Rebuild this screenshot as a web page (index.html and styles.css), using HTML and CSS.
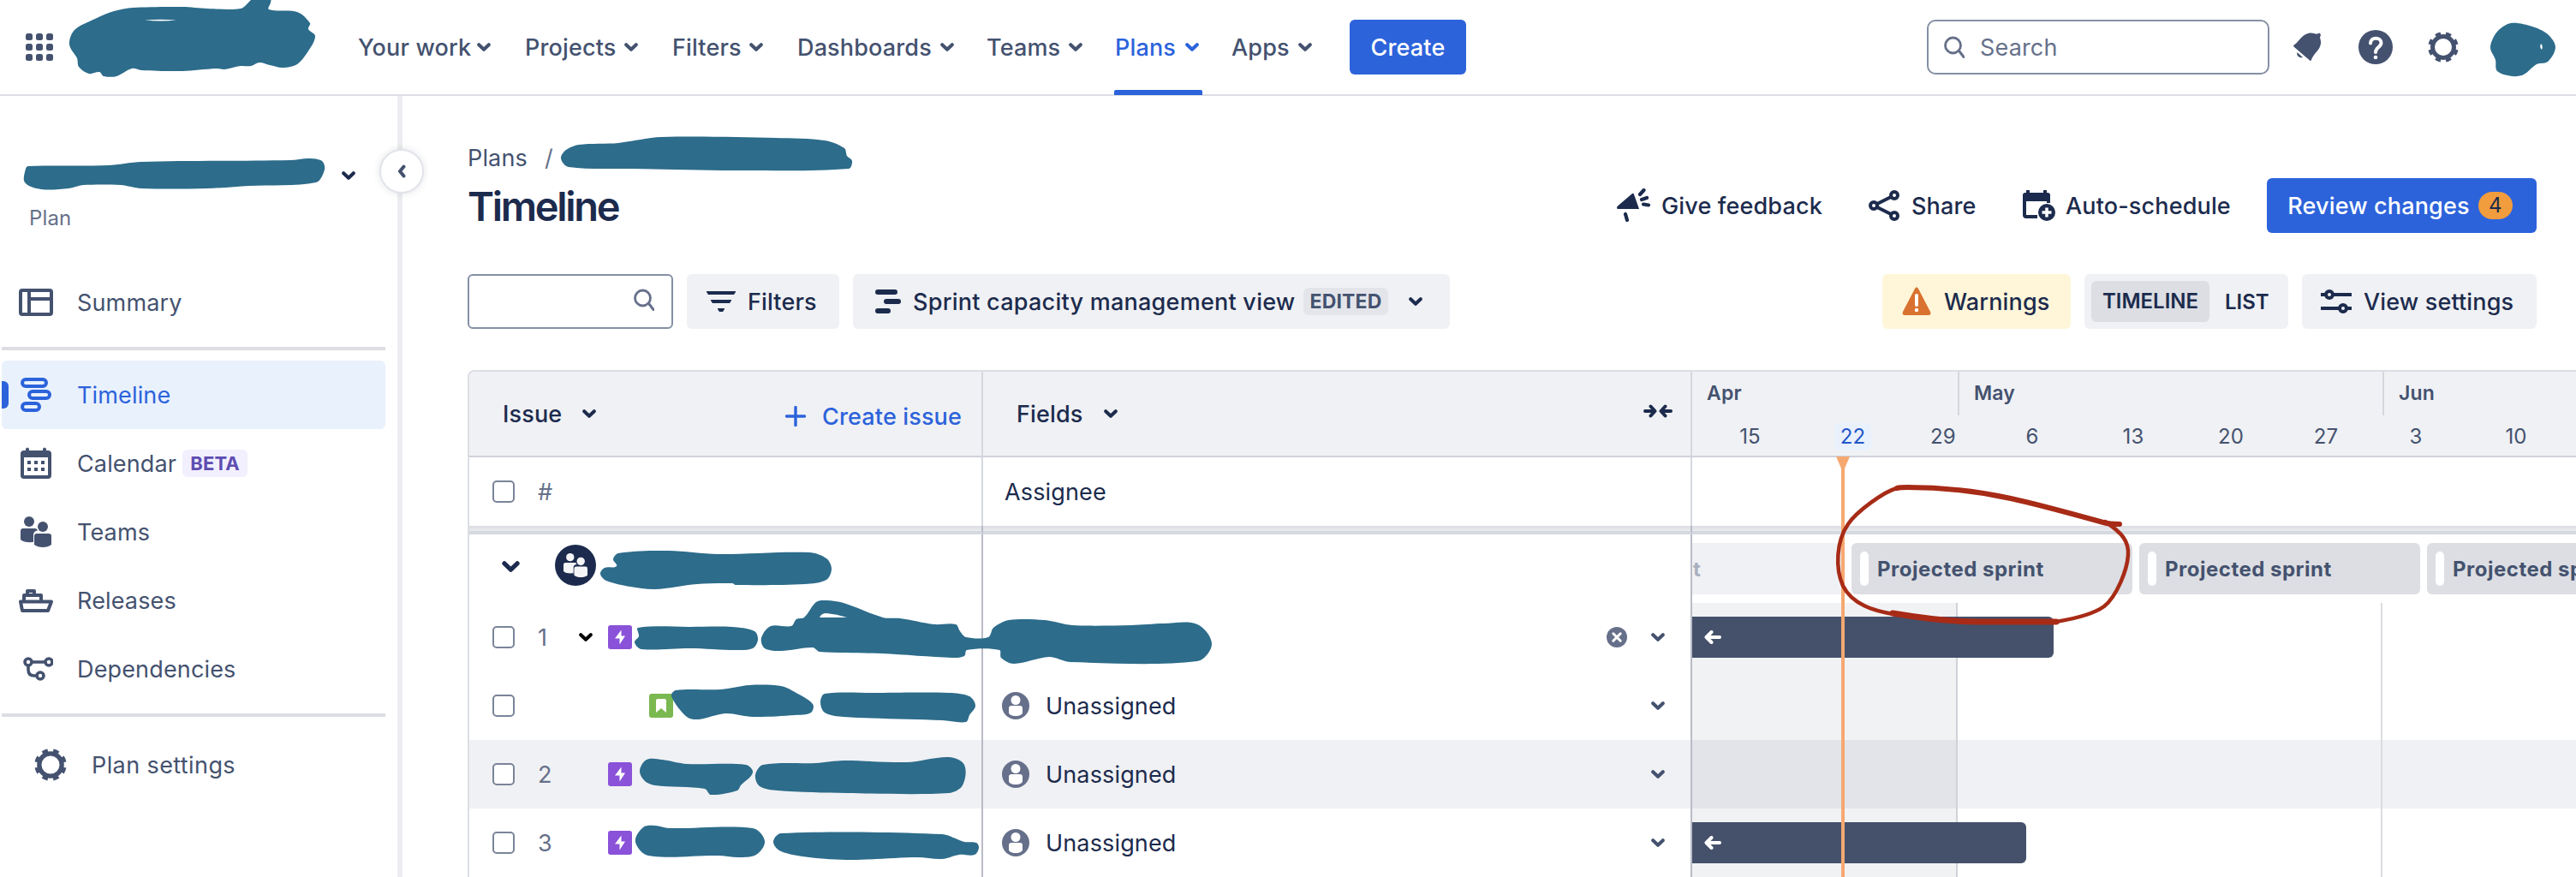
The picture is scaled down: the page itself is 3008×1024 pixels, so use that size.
FILE: index.html
```html
<!DOCTYPE html>
<html lang="en">
<head>
  <meta charset="UTF-8">
  <meta name="viewport" content="width=device-width, initial-scale=1.0">
  <title>Timeline - Plans</title>
  <link rel="stylesheet" href="styles.css">
</head>
<body>
  <!-- shared icons -->
  <svg class="sprite" aria-hidden="true">
    <symbol id="chevron" viewBox="0 0 16 10"><path d="M2.2 2.2 8 7.800l5.800-5.600" fill="none" stroke="currentColor" stroke-width="4" stroke-linecap="round" stroke-linejoin="round"/></symbol>
    <symbol id="gear" viewBox="0 0 38 38">
      <circle cx="19" cy="19" r="12.500" fill="none" stroke="currentColor" stroke-width="5"/>
      <circle cx="19" cy="19" r="15.500" fill="none" stroke="currentColor" stroke-width="4.600" pathLength="16" stroke-dasharray="1 1" stroke-dashoffset="-0.500"/>
    </symbol>
    <symbol id="magnifier" viewBox="0 0 24 26"><path d="M18 18l5 6.500" stroke="currentColor" stroke-width="3" stroke-linecap="round"/><circle cx="10.500" cy="11" r="9" fill="none" stroke="currentColor" stroke-width="2.800"/></symbol>
    <symbol id="people" viewBox="0 0 36 36">
      <circle cx="10" cy="6" r="6" fill="currentColor"/>
      <path d="M3 14h14a3 3 0 0 1 3 2.500c-3 .5-5 2-5 5V30C9 30.500 3 30 0 27V17a3 3 0 0 1 3-3z" fill="currentColor"/>
      <circle cx="26" cy="12" r="6" fill="currentColor"/>
      <path d="M19 20h14a3 3 0 0 1 3 3v10c-5 4-15 4-20 0V23a3 3 0 0 1 3-3z" fill="currentColor"/>
    </symbol>
    <symbol id="epic" viewBox="0 0 28 28"><rect width="28" height="28" rx="3" fill="#8a52d9"/><path d="M15.500 5.500 8 15.500h5.500V22.500L20 12.500h-4.500z" fill="#fff"/></symbol>
    <symbol id="story" viewBox="0 0 28 28"><rect width="28" height="28" rx="3" fill="#7ab850"/><path d="M10 6h8a2 2 0 0 1 2 2v14l-6-5-6 5V8a2 2 0 0 1 2-2z" fill="#fff"/></symbol>
    <symbol id="person" viewBox="0 0 32 32"><circle cx="16" cy="16" r="16" fill="#66708a"/><circle cx="16" cy="9.500" r="5.500" fill="#fff"/><path d="M11 16h10a3 3 0 0 1 3 3v5c0 2-3 4-8 4s-8-2-8-4v-5a3 3 0 0 1 3-3z" fill="#fff"/></symbol>
    <symbol id="arrow-left" viewBox="0 0 20 16"><path d="M18 8H3M8.500 2 2.500 8l6 6" fill="none" stroke="currentColor" stroke-width="4" stroke-linecap="round" stroke-linejoin="round"/></symbol>
  </svg>

  <header class="topbar">
    <svg class="switcher" viewBox="0 0 32 32"><g fill="#44526f"><rect width="8" height="8" rx="2.500"/><rect x="12" width="8" height="8" rx="2.500"/><rect x="24" width="8" height="8" rx="2.500"/><rect y="12" width="8" height="8" rx="2.500"/><rect x="12" y="12" width="8" height="8" rx="2.500"/><rect x="24" y="12" width="8" height="8" rx="2.500"/><rect y="24" width="8" height="8" rx="2.500"/><rect x="12" y="24" width="8" height="8" rx="2.500"/><rect x="24" y="24" width="8" height="8" rx="2.500"/></g></svg>
    <nav class="main-nav">
      <a>Your work <svg class="chev"><use href="#chevron"/></svg></a>
      <a>Projects <svg class="chev"><use href="#chevron"/></svg></a>
      <a>Filters <svg class="chev"><use href="#chevron"/></svg></a>
      <a>Dashboards <svg class="chev"><use href="#chevron"/></svg></a>
      <a>Teams <svg class="chev"><use href="#chevron"/></svg></a>
      <a class="active">Plans <svg class="chev"><use href="#chevron"/></svg></a>
      <a>Apps <svg class="chev"><use href="#chevron"/></svg></a>
    </nav>
    <button class="primary create">Create</button>
    <div class="search"><svg class="magnifier"><use href="#magnifier"/></svg>Search</div>
    <div class="top-icons">
      <svg class="bell" viewBox="0 0 34 34"><path d="M0 15c6-3 9-13 19-14.500 4-.5 6 1 8 1.200l3.500-1.200 1.500 2-1 3.500c1 3 1.500 6 .5 9-2 7-8 9-11 18q-1.500 0-2-1L1 17q-1-1-1-2z" fill="#44526f"/><path d="M4.500 23 11 29c-3 1-8-1-6.500-6z" fill="#44526f"/></svg>
      <svg class="help" viewBox="0 0 40 40"><circle cx="20" cy="20" r="20" fill="#44526f"/><path d="M14 15.500c0-8 12.500-7.500 12.500-.5 0 5-6.500 5-6.500 11" fill="none" stroke="#fff" stroke-width="4" stroke-linecap="round"/><circle cx="20" cy="32" r="2.300" fill="#fff"/></svg>
      <svg class="gear"><use href="#gear"/></svg>
    </div>
  </header>

  <div class="layout">
    <aside class="sidebar">
      <div class="plan-switch"><svg class="chev"><use href="#chevron"/></svg></div>
      <p class="plan-type">Plan</p>
      <ul class="side-nav">
        <li><svg viewBox="0 0 40 40"><rect x="2" y="6" width="36" height="28" rx="2" fill="none" stroke="currentColor" stroke-width="4"/><path d="M12 6v28M12 16h26" stroke="currentColor" stroke-width="4"/></svg>Summary</li>
        <li class="rule"></li>
        <li class="selected"><svg viewBox="0 0 40 40"><g fill="none" stroke="currentColor" stroke-width="4"><rect x="4" y="2" width="28" height="8" rx="4"/><rect x="12" y="16" width="24" height="8" rx="4"/><rect x="4" y="30" width="20" height="8" rx="4"/></g></svg>Timeline</li>
        <li><svg viewBox="0 0 40 40"><rect x="4" y="7" width="32" height="29" rx="2" fill="none" stroke="currentColor" stroke-width="4"/><path d="M2 8h36v5H2zM8 3q2-3 4 0v5H8zM28 3q2-3 4 0v5h-4z" fill="currentColor"/><path d="M10 19h20M10 27h20" stroke="currentColor" stroke-width="4" stroke-dasharray="4 4"/></svg>Calendar <span class="beta">BETA</span></li>
        <li><svg viewBox="-2 -2 40 40"><use href="#people" width="36" height="36"/></svg>Teams</li>
        <li><svg viewBox="0 0 40 40"><path d="M2 21.500h36L34 32H4zM6 21v-7h20v7M10 14V9h8v5" fill="none" stroke="currentColor" stroke-width="4" stroke-linejoin="round"/></svg>Releases</li>
        <li><svg viewBox="0 0 40 40"><g fill="none" stroke="currentColor" stroke-width="3.600"><circle cx="11" cy="12" r="4"/><circle cx="35" cy="12" r="4"/><circle cx="25" cy="28" r="4"/><path d="M15 12h16M11 16v5q0 7 7 7h3"/></g></svg>Dependencies</li>
        <li class="rule"></li>
        <li class="settings"><svg class="gear"><use href="#gear"/></svg>Plan settings</li>
      </ul>
      <button class="collapse" aria-label="Collapse sidebar"><svg viewBox="0 0 10 16"><path d="M7.500 2.500 3 8l4.500 5.500" fill="none" stroke="currentColor" stroke-width="4" stroke-linecap="round" stroke-linejoin="round"/></svg></button>
    </aside>

    <main class="content">
      <div class="crumbs"><span>Plans</span><span class="slash">/</span></div>
      <div class="title-row">
        <h1>Timeline</h1>
        <div class="actions">
          <a class="feedback"><svg viewBox="0 0 40 40"><path d="M1 20.500 18 6q1.500-1 2 1l6 17H1q-2-1 0-3.500z" fill="currentColor"/><path d="M10 30l2 7M27 7l4.500-5M29 13l6-2M31 18.500l6 1" stroke="currentColor" stroke-width="4.200" stroke-linecap="round"/></svg>Give feedback</a>
          <a class="share"><svg viewBox="0 0 36 36"><g fill="none" stroke="currentColor" stroke-width="4"><circle cx="6" cy="18" r="4"/><circle cx="30" cy="6" r="4"/><circle cx="30" cy="30" r="4"/><path d="M10 16 26 8M10 20l16 8"/></g></svg>Share</a>
          <a class="auto"><svg viewBox="0 0 38 38"><path d="M17 32H4q-2 0-2-2V8h28v8" fill="none" stroke="currentColor" stroke-width="4"/><path d="M0 7q0-3 3-3h1V1h4v3h16V1h4v3h1q3 0 3 3v7H0z" fill="currentColor"/><circle cx="28" cy="27" r="10" fill="currentColor"/><path d="M28 21.500v11M22.500 27h11" stroke="#fff" stroke-width="3.500"/></svg>Auto-schedule</a>
          <button class="primary review">Review changes <span class="count">4</span></button>
        </div>
      </div>

      <div class="toolbar">
        <div class="filter-input"><svg class="magnifier"><use href="#magnifier"/></svg></div>
        <button class="btn filters"><svg viewBox="0 0 34 24"><path d="M0 0h34v1l-2 3H2L0 1zM5 10h24v1l-2 3H7l-2-3zM13 20h8v1l-2 3h-4l-2-3z" fill="currentColor"/></svg>Filters</button>
        <button class="btn view"><svg viewBox="0 0 30 28"><path d="M3 3h20M13 14h14M3 25h12" stroke="currentColor" stroke-width="6" stroke-linecap="round"/></svg><span class="view-name">Sprint capacity management view</span><span class="edited">EDITED</span><svg class="chev"><use href="#chevron"/></svg></button>
        <button class="btn warnings"><svg viewBox="0 0 34 34"><path d="M15 2q2-3.500 4 0l14 27q1.500 4-2 4H3q-3.500 0-2-4z" fill="#d97230"/><path d="M17 10v11" stroke="#fff" stroke-width="4" stroke-linecap="round"/><circle cx="17" cy="27" r="2.200" fill="#fff"/></svg>Warnings</button>
        <div class="toggle"><span class="on">TIMELINE</span><span>LIST</span></div>
        <button class="btn settings-btn"><svg viewBox="0 0 36 28"><g fill="none" stroke="currentColor" stroke-width="4"><circle cx="10" cy="6" r="4"/><circle cx="26" cy="22" r="4"/><path d="M0 6h6M14 6h22M0 22h22M30 22h6"/></g></svg>View settings</button>
      </div>

      <section class="table">
        <div class="col issues">
          <div class="head"><span>Issue</span><svg class="chev"><use href="#chevron"/></svg><a class="create-issue"><svg viewBox="0 0 24 24"><path d="M12 1.500v21M1.500 12h21" stroke="currentColor" stroke-width="3.400" stroke-linecap="round"/></svg>Create issue</a></div>
          <div class="row"><i class="check"></i><span class="num">#</span></div>
          <div class="band"></div>
          <div class="row team"><svg class="team-chev"><use href="#chevron"/></svg><span class="team-avatar"><svg><use href="#people"/></svg></span></div>
          <div class="row"><i class="check"></i><span class="num">1</span><svg class="chev black"><use href="#chevron"/></svg><svg class="type"><use href="#epic"/></svg></div>
          <div class="row child"><i class="check"></i><span class="num"></span><svg class="type"><use href="#story"/></svg></div>
          <div class="row alt"><i class="check"></i><span class="num">2</span><svg class="type"><use href="#epic"/></svg></div>
          <div class="row"><i class="check"></i><span class="num">3</span><svg class="type"><use href="#epic"/></svg></div>
        </div>

        <div class="col fields">
          <div class="head"><span>Fields</span><svg class="chev"><use href="#chevron"/></svg><svg class="shrink" viewBox="0 0 34 16"><path d="M2 8h11M8.500 2.500 13.500 8l-5 5.500M32 8H21M25.500 2.500 20.500 8l5 5.500" fill="none" stroke="currentColor" stroke-width="4" stroke-linecap="round" stroke-linejoin="round"/></svg></div>
          <div class="row"><span class="assignee">Assignee</span></div>
          <div class="band"></div>
          <div class="row"></div>
          <div class="row"><svg class="clear" viewBox="0 0 24 24"><circle cx="12" cy="12" r="12" fill="#66708a"/><path d="M7.800 7.800l8.400 8.400M16.200 7.800l-8.400 8.400" stroke="#fff" stroke-width="3" stroke-linecap="round"/></svg><svg class="chev"><use href="#chevron"/></svg></div>
          <div class="row"><svg class="person"><use href="#person"/></svg>Unassigned<svg class="chev end"><use href="#chevron"/></svg></div>
          <div class="row alt"><svg class="person"><use href="#person"/></svg>Unassigned<svg class="chev end"><use href="#chevron"/></svg></div>
          <div class="row"><svg class="person"><use href="#person"/></svg>Unassigned<svg class="chev end"><use href="#chevron"/></svg></div>
        </div>

        <div class="col chart">
          <div class="head dates">
            <div class="months"><span>Apr</span><span>May</span><span>Jun</span></div>
            <div class="days"><span>15</span><span class="today">22</span><span>29</span><span>6</span><span>13</span><span>20</span><span>27</span><span>3</span><span>10</span></div>
          </div>
          <div class="row"></div>
          <div class="band"></div>
          <div class="row sprints"><div class="sprint past">t</div><div class="sprint">Projected sprint</div><div class="sprint">Projected sprint</div><div class="sprint">Projected sprint</div></div>
          <div class="row"><div class="bar long"><svg><use href="#arrow-left"/></svg></div></div>
          <div class="row"></div>
          <div class="row alt"></div>
          <div class="row"><div class="bar short"><svg><use href="#arrow-left"/></svg></div></div>
          <!-- overlays on the chart -->
          <div class="shade"></div>
          <div class="june-line"></div>
          <svg class="marker" viewBox="0 0 16 14"><path d="M0 0h16L10 14H6z" fill="#f6a871"/></svg>
          <div class="today-line"></div>
        </div>
      </section>
    </main>
  </div>

  <!-- hand drawn marks over the page -->
  <svg class="marks" viewBox="0 0 3008 1024">
    <g id="scribbles"></g>
    <path d="M169 23.500q18-1.500 37 0-18 2-37 0z" fill="#fff"/>
    <path d="M2967 51q3 3 1 7-3-3-1-7z" fill="#fff"/>
    <path d="M957 721q2-5 8-5 12 1 24 5z" fill="#fff"/>
    <g fill="none" stroke="#a72b16" stroke-linecap="round" stroke-linejoin="round">
      <path d="M2475 612q-12 0-19-2C2420 600 2376 588 2348 582 2316 575 2270 569 2227 569q-8 0-12 1" stroke-width="6"/>
      <path d="M2215 570C2200 574 2168 597 2158 612 2144 632 2143 664 2152 684 2162 704 2185 715 2227 719" stroke-width="4.500"/>
      <path d="M2210 716C2240 721 2275 726 2310 726H2401" stroke-width="7"/>
      <path d="M2401 726C2425 722 2446 716 2457 708 2472 696 2484 665 2485 648 2486 632 2478 622 2458 609" stroke-width="4.500"/>
    </g>
  </svg>
  <script src="script.js"></script>
</body>
</html>
```
FILE: styles.css
```css
* {
  box-sizing: border-box;
}

body {
  margin: 0;
  width: 3008px;
  height: 1024px;
  overflow: hidden;
  position: relative;
  background: #fff;
  color: #1c2b4d;
  font-family: Inter, "Liberation Sans", sans-serif;
  font-size: 27px;
  letter-spacing: 0.15px;
}

svg {
  display: block;
  flex: none;
}

button {
  border: none;
  font: inherit;
  letter-spacing: inherit;
  color: inherit;
}

.sprite {
  position: absolute;
  width: 0;
  height: 0;
}

.chev {
  width: 16px;
  height: 10px;
}

.magnifier {
  width: 24px;
  height: 26px;
  color: #66708a;
}

.gear {
  width: 38px;
  height: 38px;
}

/* top bar */
.topbar {
  display: flex;
  align-items: center;
  height: 112px;
  padding: 0 136px 0 30px;
  border-bottom: 2px solid #dcdee4;
}

.switcher {
  width: 32px;
  height: 32px;
}

.main-nav {
  display: grid;
  grid-template-columns: 155px 134px 108px 185px 112px 98px 94px;
  column-gap: 38px;
  height: 110px;
  margin-left: 356px;
  color: #44526f;
  font-weight: 500;
}

.main-nav a {
  display: flex;
  align-items: center;
  justify-content: space-between;
  white-space: nowrap;
}

.main-nav a:nth-child(n + 2):nth-child(-n + 4) {
  padding-left: 2px;
}

.main-nav .active {
  position: relative;
  color: #2c63db;
}

.main-nav .active::after {
  content: "";
  position: absolute;
  left: -1px;
  right: -4px;
  bottom: -1px;
  height: 6px;
  border-radius: 2px 2px 0 0;
  background: #2c63db;
}

.primary {
  display: flex;
  align-items: center;
  justify-content: center;
  height: 64px;
  border-radius: 6px;
  background: #2c63db;
  color: #fff;
  font-weight: 500;
}

.create {
  width: 136px;
  margin-left: 44px;
}

.search {
  display: flex;
  align-items: center;
  gap: 18px;
  width: 400px;
  height: 64px;
  margin-left: auto;
  padding-left: 18px;
  border: 2px solid #8590a5;
  border-radius: 10px;
  color: #66708a;
}

.top-icons {
  display: flex;
  align-items: center;
  color: #44526f;
}

.bell {
  width: 34px;
  height: 34px;
  margin: 0 42px 0 28px;
}

.help {
  width: 40px;
  height: 40px;
  margin-right: 40px;
}

/* side bar */
.layout {
  display: flex;
  height: 912px;
}

.sidebar {
  position: relative;
  flex: none;
  width: 470px;
  padding: 83px 14px 0 2px;
  border-right: 6px solid #ecedf0;
  color: #44526f;
}

.plan-switch {
  display: flex;
  justify-content: flex-end;
  padding: 5px 35px 0 0;
  height: 44px;
  color: #1c2b4d;
}

.plan-type {
  margin: 0 0 43px 32px;
  font-size: 24px;
  line-height: 31px;
  color: #66708a;
}

.side-nav {
  margin: 0;
  padding: 0;
  list-style: none;
}

.side-nav li {
  display: flex;
  align-items: center;
  height: 80px;
  padding-left: 20px;
  border-radius: 6px;
}

.side-nav li svg {
  width: 40px;
  height: 40px;
  margin-right: 28px;
}

.side-nav .rule {
  height: 4px;
  margin: 12px 0;
  border-radius: 0;
  background: #dcdee4;
}

.side-nav .selected {
  position: relative;
  background: #e9f1fd;
  color: #2c63db;
}

.selected::before {
  content: "";
  position: absolute;
  left: 0;
  width: 8px;
  height: 32px;
  border-radius: 0 6px 6px 0;
  background: #2c63db;
}

.beta {
  margin-left: 7px;
  padding: 0 9px;
  border-radius: 6px;
  background: #f2effe;
  color: #5e4db2;
  font-size: 22px;
  font-weight: 700;
  line-height: 32px;
}

.side-nav .settings {
  margin-top: 16px;
  padding-left: 37px;
  letter-spacing: 0.4px;
}

.collapse {
  position: absolute;
  left: 443px;
  top: 62px;
  display: flex;
  align-items: center;
  justify-content: center;
  width: 52px;
  height: 52px;
  padding: 0;
  border: 2px solid #e3e4ea;
  border-radius: 50%;
  background: #fff;
  color: #44526f;
  box-shadow: 0 0 8px rgba(9, 30, 66, 0.12);
}

.collapse svg {
  width: 10px;
  height: 16px;
}

/* page header */
.content {
  flex: 1;
  min-width: 0;
  padding: 52px 0 0 76px;
}

.crumbs {
  display: flex;
  align-items: center;
  gap: 20px;
  height: 40px;
  color: #44526f;
}

.slash {
  color: #66708a;
}

.title-row {
  display: flex;
  align-items: center;
  justify-content: space-between;
  height: 64px;
  margin: 4px 46px 48px 0;
}

h1 {
  margin: 0;
  font-size: 47px;
  font-weight: 600;
  letter-spacing: -2.3px;
}

.actions {
  display: flex;
  align-items: center;
  font-weight: 500;
}

.actions a {
  display: flex;
  align-items: center;
  white-space: nowrap;
}

.feedback {
  width: 294px;
}

.feedback svg {
  width: 40px;
  height: 40px;
  margin-right: 12px;
}

.share {
  width: 180px;
}

.share svg {
  width: 36px;
  height: 36px;
  margin-right: 14px;
}

.auto {
  width: 285px;
}

.auto svg {
  width: 38px;
  height: 38px;
  margin-right: 12px;
}

.review {
  width: 315px;
  padding: 0 4px 0 0;
  gap: 10px;
  white-space: nowrap;
}

.count {
  width: 40px;
  border-radius: 16px;
  background: #f19c3d;
  color: #1c2b4d;
  font-size: 24px;
  font-weight: 400;
  line-height: 32px;
  text-align: center;
}

/* toolbar */
.toolbar {
  display: flex;
  height: 64px;
  margin: 0 46px 48px 0;
  font-weight: 500;
}

.filter-input {
  display: flex;
  align-items: center;
  justify-content: flex-end;
  width: 240px;
  margin-right: 16px;
  padding: 0 20px 4px 0;
  border: 2px solid #8590a5;
  border-radius: 6px;
}

.btn {
  display: flex;
  align-items: center;
  padding: 0;
  border-radius: 6px;
  background: #f0f1f4;
  white-space: nowrap;
}

.filters {
  width: 178px;
  padding-left: 23px;
  margin-right: 16px;
}

.filters svg {
  width: 34px;
  height: 24px;
  margin-right: 14px;
}

.view {
  width: 697px;
  padding-left: 26px;
}

.view > svg:first-child {
  width: 30px;
  height: 28px;
}

.view-name {
  width: 470px;
  padding-left: 14px;
  text-align: left;
  letter-spacing: 0.25px;
}

.edited {
  width: 99px;
  border-radius: 6px;
  background: #e3e5ea;
  color: #44526f;
  font-size: 23px;
  font-weight: 700;
  line-height: 32px;
  text-align: center;
}

.view .chev {
  margin-left: 24px;
}

.warnings {
  width: 220px;
  margin-left: auto;
  padding-left: 23px;
  background: #fff6d9;
}

.warnings svg {
  width: 34px;
  height: 34px;
  margin-right: 15px;
}

.toggle {
  display: flex;
  align-items: center;
  width: 238px;
  margin: 0 16px;
  padding-left: 8px;
  border-radius: 6px;
  background: #f0f1f4;
  font-size: 24px;
  font-weight: 600;
  letter-spacing: 0;
}

.toggle .on {
  width: 138px;
  margin-right: 18px;
  border-radius: 6px;
  background: #dcdee3;
  line-height: 48px;
  text-align: center;
}

.settings-btn {
  width: 274px;
  padding-left: 22px;
}

.settings-btn svg {
  width: 36px;
  height: 28px;
  margin-right: 14px;
}

/* table */
.table {
  display: flex;
  border: 2px solid #dcdee4;
  border-width: 2px 0 0 2px;
  border-radius: 8px 0 0 0;
}

.col {
  position: relative;
  flex: none;
}

.issues {
  width: 600px;
}

.fields {
  width: 828px;
}

.chart {
  flex: 1;
  min-width: 0;
  overflow: hidden;
}

.head {
  display: flex;
  align-items: center;
  height: 100px;
  border-bottom: 2px solid #cfd1db;
  background: #f0f1f4;
  font-weight: 500;
}

.issues .head {
  padding: 0 23px 0 39px;
  border-radius: 6px 0 0 0;
}

.issues > *,
.fields > * {
  border-right: 2px solid #b9bbc8;
}

.issues > .head,
.fields > .head,
.head + .row {
  border-right-color: #d5d7de;
}

.head .chev {
  margin-left: 24px;
}

.create-issue {
  display: flex;
  align-items: center;
  margin: 6px 0 0 auto;
  color: #2c63db;
}

.create-issue svg {
  width: 24px;
  height: 24px;
  margin-right: 19px;
}

.row {
  display: flex;
  align-items: center;
  height: 80px;
}

.alt {
  background: #f0f1f4;
}

.band {
  height: 10px;
  border-bottom: 4px solid #d6d9e0;
  background: linear-gradient(#dadce2, #ebecf0);
}

.issues .row {
  padding-left: 27px;
}

.check {
  width: 26px;
  height: 26px;
  border: 2px solid #7a8499;
  border-radius: 5px;
  background: #fff;
}

.num {
  width: 47px;
  margin-left: 27px;
  color: #66708a;
}

.type {
  width: 28px;
  height: 28px;
  margin-left: 35px;
}

.black {
  margin-left: 1px;
  color: #000;
}

.black + .type {
  margin-left: 18px;
}

.child .type {
  margin-left: 83px;
}

.issues .team {
  padding: 0 0 8px 38px;
}

.team-chev {
  width: 21px;
  height: 13px;
  margin-top: 3px;
}

.team-avatar {
  display: flex;
  align-items: center;
  justify-content: center;
  width: 48px;
  height: 48px;
  margin-left: 41px;
  border-radius: 50%;
  background: #1c2b4d;
  color: #f4f5f7;
}

.team-avatar svg {
  width: 28px;
  height: 28px;
}

.fields .head {
  padding: 0 21px 0 39px;
}

.shrink {
  width: 34px;
  height: 16px;
  margin: 0 0 6px auto;
}

.fields .row {
  padding: 0 30px 0 22px;
}

.fields .row .chev {
  color: #44526f;
}

.person {
  width: 32px;
  height: 32px;
  margin-right: 19px;
}

.clear {
  width: 24px;
  height: 24px;
  margin: 0 28px 0 auto;
}

.end {
  margin-left: auto;
}

.fields .row .end {
  margin-left: auto;
}

.assignee {
  padding-left: 3px;
}

/* chart */
.dates {
  display: block;
  color: #44526f;
  font-size: 24px;
}

.months {
  display: grid;
  grid-template-columns: 310px 496px 226px;
  height: 50px;
  font-size: 23px;
  font-weight: 600;
  line-height: 51px;
}

.months span {
  padding-left: 17px;
}

.months span + span {
  border-left: 2px solid #d5d7de;
}

.days {
  display: grid;
  grid-template-columns: 135px 105px 106px 102px 134px 94px 128px 82px 152px;
  font-weight: 400;
  line-height: 32px;
  padding-top: 10px;
}

.days span {
  text-align: center;
}

.days .today {
  width: 43px;
  margin-left: 31px;
  border-radius: 6px;
  background: #e9f1fd;
  color: #2257c9;
}

.sprints {
  gap: 8px;
}

.sprint {
  position: relative;
  z-index: 1;
  flex: none;
  width: 328px;
  height: 60px;
  padding-left: 30px;
  border-radius: 6px;
  background: #dcdee3;
  color: #44526f;
  font-size: 24px;
  font-weight: 700;
  letter-spacing: 0.5px;
  line-height: 61px;
  white-space: nowrap;
}

.sprint::before {
  content: "";
  position: absolute;
  left: 10px;
  top: 10px;
  width: 10px;
  height: 40px;
  border-radius: 5px;
  background: #fff;
}

.past {
  width: 178px;
  padding-left: 1px;
  border-radius: 0;
  background: #f0f1f4;
  color: #a9b0be;
}

.past::before {
  display: none;
}

.bar {
  position: relative;
  z-index: 1;
  display: flex;
  align-items: center;
  height: 48px;
  padding-left: 14px;
  border-radius: 0 6px 6px 0;
  background: #45516b;
  color: #fff;
}

.bar svg {
  width: 20px;
  height: 16px;
}

.long {
  width: 422px;
}

.short {
  width: 390px;
}

.shade {
  position: absolute;
  left: 0;
  top: 270px;
  bottom: 0;
  width: 310px;
  border-right: 2px solid #d0d2d8;
  background: rgba(9, 30, 66, 0.06);
}

.june-line {
  position: absolute;
  left: 804px;
  top: 270px;
  bottom: 0;
  width: 2px;
  background: #dcdde1;
}

.marker {
  position: absolute;
  z-index: 2;
  left: 168px;
  top: 99px;
  width: 16px;
  height: 14px;
}

.today-line {
  position: absolute;
  z-index: 2;
  left: 174px;
  top: 110px;
  bottom: 0;
  width: 4px;
  background: #f6a871;
}

.marks {
  position: absolute;
  z-index: 5;
  left: 0;
  top: 0;
  width: 3008px;
  height: 1024px;
  pointer-events: none;
}

#scribbles {
  fill: #2d6c8b;
}
```
FILE: script.js
```js
// outline points of each marker scribble
const scribbles = [
  '81,52 87,35 111,22 133,13 155,9 213,8 242,10 281,10 293,0 300,-6 316,-4 316,3 314,11 347,14 362,27 360,34 368,42 361,58 347,75 330,79 315,76 303,73 293,77 281,77 262,81 252,80 213,83 165,82 154,80 136,89 121,89 116,84 104,86 92,78 90,68',
  '30,197 33,194 126,193 165,189 339,187 361,185 376,188 379,198 369,213 291,217 242,220 165,220 141,216 97,216 80,220 48,221 29,213',
  '655,185 661,175 676,169 722,167 772,160 906,161 963,164 986,173 989,182 995,188 991,197 868,199 740,197 664,195',
  '2908,55 2916,37 2932,27 2957,31 2975,40 2984,55 2975,72 2962,75 2947,87 2934,89 2916,83 2914,70',
  '701,670 706,663 720,661 716,653 722,646 781,643 838,647 945,645 965,652 971,664 965,677 940,682 859,683 855,681 814,682 765,688 736,685 708,678',
  '741,750 746,743 745,733 806,732 855,732 881,737 885,747 879,757 859,759 806,757 749,758',
  '889,745 900,731 924,731 930,723 939,721 953,703 965,701 985,704 1031,721 1051,722 1091,729 1116,729 1121,737 1128,744 1154,744 1160,733 1178,724 1220,724 1252,730 1321,730 1359,728 1398,729 1415,752 1398,772 1250,773 1225,767 1184,775 1169,768 1167,759 1129,759 1126,766 1112,768 1030,763 957,761 949,756 912,760 893,757',
  '784,813 789,806 842,805 875,800 912,801 928,808 949,822 947,832 928,835 879,837 847,833 816,840 802,837',
  '958,820 963,810 1026,809 1108,809 1132,813 1139,824 1132,835 1128,843 1100,841 985,837 963,832',
  '747,900 755,887 773,887 802,892 871,893 879,902 865,917 861,923 830,928 823,921 765,917 753,912',
  '882,905 891,893 953,891 985,888 1059,890 1108,884 1126,893 1124,917 1108,926 989,926 908,923 887,918',
  '742,983 751,966 765,964 781,967 879,967 893,982 883,998 863,1001 838,999 757,999',
  '903,983 912,973 1100,974 1126,983 1140,984 1143,990 1138,998 1120,998 1100,1003 1071,1001 994,1004 945,1001 912,994'
];

// closed curve through the points, with short handles so it stays close to them
function smooth(text) {
  const p = text.split(' ').map(s => s.split(',').map(Number));
  const n = p.length;
  let d = 'M' + p[0];
  for (let i = 0; i < n; i++) {
    const a = p[(i + n - 1) % n], b = p[i], c = p[(i + 1) % n], e = p[(i + 2) % n];
    const len = Math.hypot(c[0] - b[0], c[1] - b[1]);
    const k1 = 0.3 * len / (Math.hypot(c[0] - a[0], c[1] - a[1]) || 1);
    const k2 = 0.3 * len / (Math.hypot(e[0] - b[0], e[1] - b[1]) || 1);
    d += 'C' + [b[0] + (c[0] - a[0]) * k1, b[1] + (c[1] - a[1]) * k1,
      c[0] - (e[0] - b[0]) * k2, c[1] - (e[1] - b[1]) * k2, c[0], c[1]].join(' ');
  }
  return d + 'Z';
}

const group = document.getElementById('scribbles');
scribbles.forEach(points => {
  const path = document.createElementNS('http://www.w3.org/2000/svg', 'path');
  path.setAttribute('d', smooth(points));
  group.appendChild(path);
});
```
